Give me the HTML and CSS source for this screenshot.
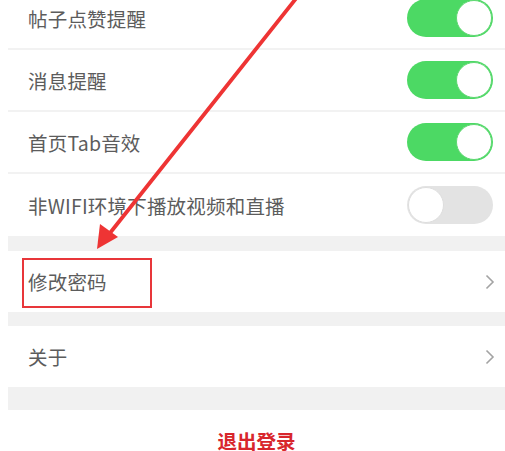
FILE: index.html
```html
<!DOCTYPE html>
<html lang="zh">
<head>
<meta charset="utf-8">
<link rel="stylesheet" href="styles.css">
</head>
<body>
<div class="page">
  <div class="list">
    <div class="row"><span class="label">帖子点赞提醒</span><span class="toggle on"><span class="knob"></span></span></div>
    <div class="row"><span class="label">消息提醒</span><span class="toggle on"><span class="knob"></span></span></div>
    <div class="row"><span class="label">首页Tab音效</span><span class="toggle on"><span class="knob"></span></span></div>
    <div class="row last"><span class="label">非WIFI环境下播放视频和直播</span><span class="toggle off"><span class="knob"></span></span></div>
  </div>
  <div class="gap g1"></div>
  <div class="row link"><span class="label boxed">修改密码</span><span class="chev"><svg width="10" height="16" viewBox="0 0 10 16"><path d="M1.5 1.5 L8 8 L1.5 14.5" fill="none" stroke="#a3a3a3" stroke-width="1.6"/></svg></span></div>
  <div class="gap g2"></div>
  <div class="row link"><span class="label">关于</span><span class="chev"><svg width="10" height="16" viewBox="0 0 10 16"><path d="M1.5 1.5 L8 8 L1.5 14.5" fill="none" stroke="#a3a3a3" stroke-width="1.6"/></svg></span></div>
  <div class="gap g3"></div>
  <div class="logout">退出登录</div>
</div>
<svg class="arrow" width="505" height="451" viewBox="0 0 505 451">
  <line x1="298" y1="-4" x2="110" y2="233" stroke="#ee3434" stroke-width="3.8" stroke-linecap="round"/>
  <polygon points="97,249 100,224 118,237" fill="#ee3434"/>
</svg>
</body>
</html>
```
FILE: styles.css
```css
html, body {
  margin: 0;
  padding: 0;
  background: #fff;
  overflow: hidden;
}
body {
  width: 505px;
  height: 451px;
  position: relative;
  font-family: "Noto Sans CJK SC", "Noto Sans", sans-serif;
}
.page {
  margin-top: -12px;
  padding-left: 8px;
}
.row {
  box-sizing: border-box;
  height: 62px;
  display: flex;
  align-items: center;
  justify-content: space-between;
  padding: 0 12px 0 20px;
  border-bottom: 2px solid #f2f2f2;
  background: #fff;
}
.row.last, .row.link {
  border-bottom: none;
}
.row.link {
  height: 61px;
}
.label {
  font-size: 19.5px;
  color: #5c5c5c;
  letter-spacing: 0.2px;
}
.boxed {
  position: relative;
}
.boxed::after {
  content: "";
  box-sizing: border-box;
  position: absolute;
  left: -6px;
  top: -9px;
  width: 130px;
  height: 50px;
  border: 2px solid #e8363a;
}
.toggle {
  box-sizing: border-box;
  width: 86px;
  height: 38px;
  border-radius: 19px;
  display: flex;
  align-items: center;
  padding: 1px;
}
.toggle.on {
  background: #4cd964;
  justify-content: flex-end;
}
.toggle.off {
  background: #e3e3e3;
  justify-content: flex-start;
}
.knob {
  box-sizing: border-box;
  width: 36px;
  height: 36px;
  border-radius: 50%;
  background: #fff;
}
.toggle.on .knob {
  border: 1px solid #5fd872;
}
.toggle.off .knob {
  border: 1.5px solid #dedede;
}
.chev {
  display: flex;
  margin-right: -2px;
}
.gap {
  background: #f1f1f1;
}
.g1 { height: 15px; }
.g2 { height: 14px; }
.g3 { height: 23px; }
.logout {
  height: 60px;
  display: flex;
  align-items: center;
  justify-content: center;
  font-size: 19.5px;
  font-weight: bold;
  color: #d8262c;
}
.arrow {
  position: absolute;
  left: 0;
  top: 0;
  pointer-events: none;
}
```
